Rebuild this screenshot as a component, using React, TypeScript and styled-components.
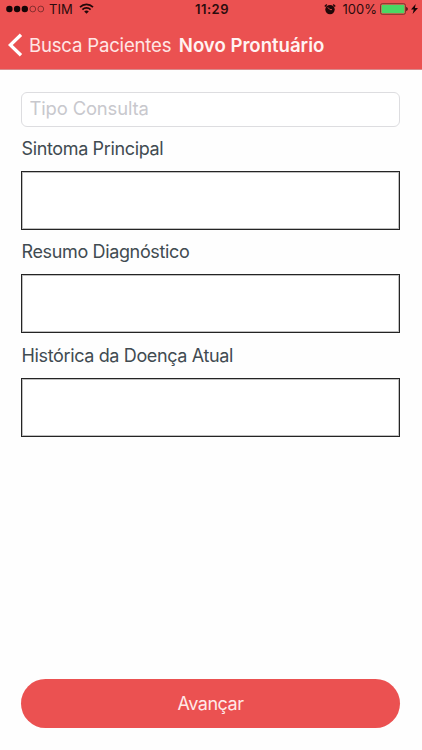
import React from "react";
import styled, { createGlobalStyle } from "styled-components";

const GlobalStyle = createGlobalStyle`
  * { box-sizing: border-box; }
  html, body, #root { height: 100%; }
  body { margin: 0; background: #fefefe; font-family: Inter, "Liberation Sans", sans-serif; }
`;

const Screen = styled.div`
  width: 100%;
  height: 100vh;
  display: flex;
  flex-direction: column;
  background: #fefefe;
`;

const Header = styled.header`
  height: 70px;
  background: #eb5151;
  border-bottom: 1px solid #d98b8c;
`;

const StatusBar = styled.div`
  height: 18px;
  display: grid;
  grid-template-columns: 1fr auto 1fr;
  align-items: center;
  padding: 0 4px 0 6px;
  color: #2b0c0d;
`;

const StatusGroup = styled.div<{ $end?: boolean }>`
  display: flex;
  align-items: center;
  justify-content: ${(p) => (p.$end ? "flex-end" : "flex-start")};
`;

const StatusText = styled.span<{ $bold?: boolean }>`
  font-size: 13px;
  line-height: 18px;
  font-weight: ${(p) => (p.$bold ? 600 : 400)};
  letter-spacing: ${(p) => (p.$bold ? 0.45 : 0)}px;
`;

const Signal = styled.svg`
  width: 39px;
  height: 8px;
  margin-right: 4px;
`;

const Wifi = styled.svg`
  width: 15px;
  height: 11px;
  margin-left: 6px;
  margin-bottom: 1px;
`;

const Alarm = styled.svg`
  width: 12px;
  height: 12px;
  margin-right: 7px;
  margin-bottom: 1px;
`;

const Battery = styled.svg`
  width: 28px;
  height: 12px;
  margin: 0 3px 0 3px;
`;

const Bolt = styled.svg`
  width: 7px;
  height: 10px;
`;

const NavBar = styled.nav`
  height: 51px;
  display: flex;
  align-items: center;
  padding: 2px 0 0 8px;
  color: #fff;
`;

const BackButton = styled.button`
  display: flex;
  align-items: center;
  gap: 6px;
  padding: 0;
  border: 0;
  background: none;
  color: #ffe6e5;
  font: 400 18.6px/24px Inter, "Liberation Sans", sans-serif;
  letter-spacing: -0.2px;
  white-space: nowrap;
`;

const Chevron = styled.svg`
  width: 15px;
  height: 24px;
`;

const Title = styled.h1`
  margin: 0 0 0 7.5px;
  font-size: 18.6px;
  line-height: 24px;
  font-weight: 600;
  letter-spacing: -0.01px;
  color: #fff3f2;
  white-space: nowrap;
`;

const Form = styled.main`
  flex: 1;
  display: flex;
  flex-direction: column;
  padding: 22px 22px 22px 21px;
`;

const TypeInput = styled.input`
  width: 100%;
  height: 34.5px;
  margin-bottom: 9.5px;
  padding: 0 7.5px 2px;
  border: 1px solid #dddde0;
  border-radius: 6px;
  background: #fff;
  font: 400 18.4px/24px Inter, "Liberation Sans", sans-serif;
  letter-spacing: -0.13px;
  outline: none;
  &::placeholder { color: #c8c8cd; opacity: 1; }
`;

const Field = styled.label`
  display: flex;
  flex-direction: column;
  height: 103.6px;
`;

const FieldLabel = styled.span`
  height: 34.6px;
  padding: 0.6px 0 0 0.5px;
  font-size: 18px;
  line-height: 24px;
  letter-spacing: -0.36px;
  color: #414b51;
`;

const TextBox = styled.textarea`
  width: 100%;
  height: 59px;
  padding: 8px;
  border: 1px solid #242424;
  border-radius: 0;
  background: #fff;
  box-shadow: inset 0 0 0 1px rgba(0, 0, 0, 0.25);
  outline: 0;
  resize: none;
`;

const SubmitButton = styled.button`
  width: 100%;
  height: 49px;
  margin-top: auto;
  padding: 1px 0 0;
  border: 0;
  border-radius: 25px;
  background: #eb5151;
  color: #ffe9e8;
  font: 400 18px/24px Inter, "Liberation Sans", sans-serif;
  letter-spacing: -0.48px;
`;

const fields = [
  "Sintoma Principal",
  "Resumo Diagnóstico",
  "Histórica da Doença Atual",
];

export default function App() {
  return (
    <Screen>
      <GlobalStyle />
      <Header>
        <StatusBar>
          <StatusGroup>
            <Signal viewBox="0 0 39 8" fill="#160506">
              <circle cx="3.4" cy="4" r="3.2" />
              <circle cx="11.1" cy="4" r="3.2" />
              <circle cx="18.8" cy="4" r="3.2" />
              <circle cx="26.8" cy="4" r="2.9" fill="none" stroke="#6d2627" strokeWidth=".8" />
              <circle cx="34.8" cy="4" r="2.9" fill="none" stroke="#6d2627" strokeWidth=".8" />
            </Signal>
            <StatusText>TIM</StatusText>
            <Wifi viewBox="0 0 15 11">
              <g fill="none" stroke="#210809" strokeWidth="1.7">
                <path d="M1 4.2C4.7.5 10.3.5 14 4.2" />
                <path d="M3.4 6.7c2.3-2.3 5.9-2.3 8.2 0" />
              </g>
              <path d="M5.2 8.4c1.3-1.2 3.3-1.2 4.6 0L7.5 10.8Z" fill="#210809" />
            </Wifi>
          </StatusGroup>
          <StatusText $bold>11:29</StatusText>
          <StatusGroup $end>
            <Alarm viewBox="0 0 12 12">
              <circle cx="6" cy="6.6" r="4.7" fill="#210809" />
              <path d="M.8 3.4 2.8 1.4M9.2 1.4l2 2" stroke="#210809" strokeWidth="1.4" />
              <path d="M3.8 4.4 6 6.6h2" fill="none" stroke="#eb5151" strokeWidth=".9" />
            </Alarm>
            <StatusText>100%</StatusText>
            <Battery viewBox="0 0 28 12">
              <rect x=".5" y=".7" width="25" height="10.6" rx="1.8" fill="#eb5151" stroke="#682b25" strokeWidth=".8" />
              <rect x="1.6" y="1.8" width="22.8" height="8.4" rx=".8" fill="#4bd763" />
              <path d="M26.3 4c1.8.5 1.8 3.5 0 4Z" fill="#210809" />
            </Battery>
            <Bolt viewBox="0 0 7 10">
              <path d="M4.7 0 0 5.6h2.8L1.6 10 7 4.1H3.9Z" fill="#160506" />
            </Bolt>
          </StatusGroup>
        </StatusBar>
        <NavBar>
          <BackButton type="button">
            <Chevron viewBox="0 0 15 24">
              <path d="M13 1.7 2.3 12 13 22.3" fill="none" stroke="#fff" strokeWidth="3.3" />
            </Chevron>
            Busca Pacientes
          </BackButton>
          <Title>Novo Prontuário</Title>
        </NavBar>
      </Header>
      <Form>
        <TypeInput placeholder="Tipo Consulta" />
        {fields.map((label) => (
          <Field key={label}>
            <FieldLabel>{label}</FieldLabel>
            <TextBox />
          </Field>
        ))}
        <SubmitButton type="button">Avançar</SubmitButton>
      </Form>
    </Screen>
  );
}
